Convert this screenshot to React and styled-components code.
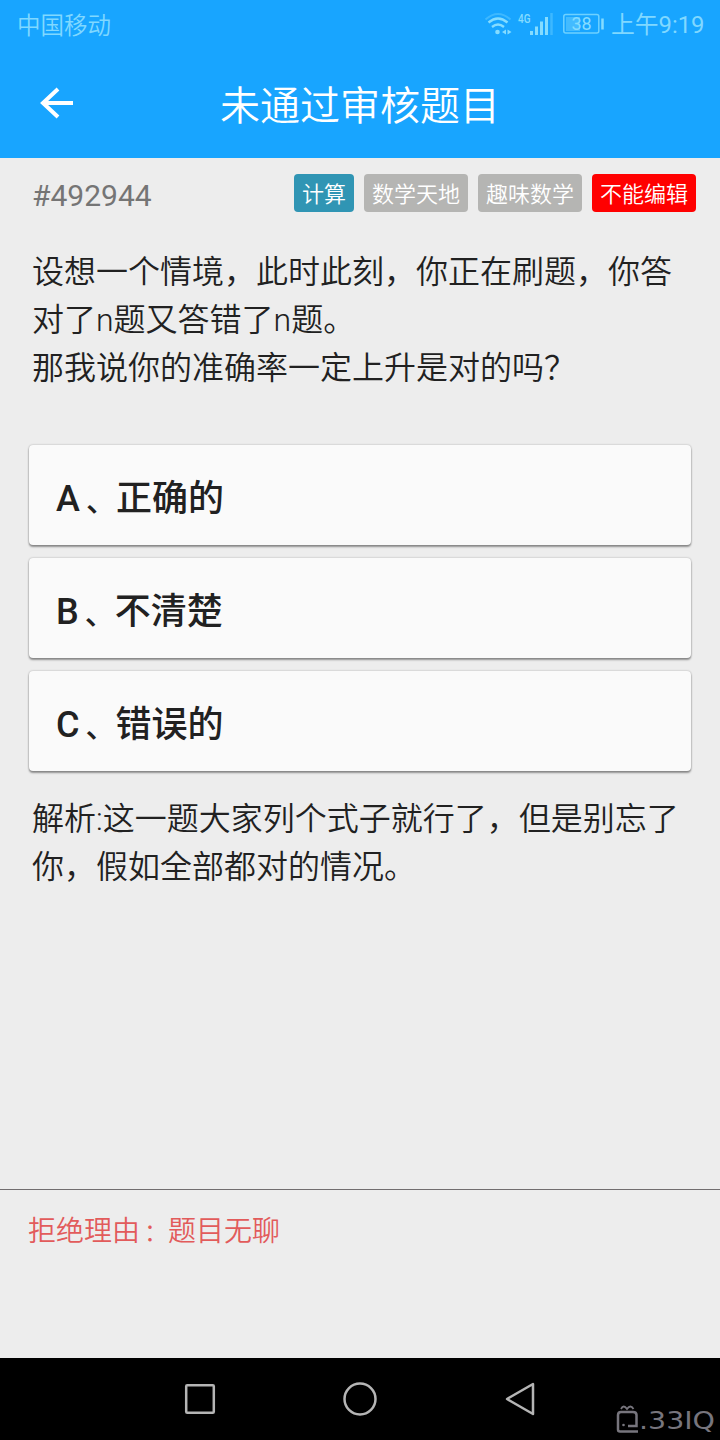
import React from "react";
import styled, { createGlobalStyle } from "styled-components";

const GlobalStyle = createGlobalStyle`
  * { box-sizing: border-box; }
  body {
    margin: 0;
    background: #ededed;
    font-family: Roboto, "Noto Sans CJK SC", sans-serif;
  }
`;

const Screen = styled.div`
  display: flex;
  flex-direction: column;
  width: 720px;
  height: 1440px;
  overflow: hidden;
  background: #ededed;
  color: #212121;
`;

const StatusBar = styled.header`
  display: flex;
  justify-content: space-between;
  align-items: center;
  height: 48px;
  padding: 0 16px 0 17px;
  background: #18a5ff;
  color: #80d8ff;
  font-size: 23.5px;
  font-weight: 350;
  white-space: nowrap;
`;

const StatusIcons = styled.div`
  display: flex;
  align-items: center;
`;

const Clock = styled.span`
  width: 93px;
  margin-left: 5px;
  padding-bottom: 3px;
  font-size: 23.8px;
  font-weight: 400;
`;

const TitleBar = styled.div`
  display: grid;
  grid-template-columns: 113px 1fr 113px;
  align-items: center;
  height: 110px;
  background: #18a5ff;
  color: #fff;
`;

const BackButton = styled.button`
  display: flex;
  justify-content: center;
  height: 64px;
  align-items: center;
  padding: 0;
  border: 0;
  background: none;
  color: inherit;
`;

const Title = styled.h1`
  margin: 0;
  padding-top: 8px;
  text-align: center;
  font-size: 40px;
  line-height: 60px;
  font-weight: 350;
`;

const Content = styled.main`
  display: flex;
  flex-direction: column;
  height: 1031px;
`;

const MetaRow = styled.div`
  display: flex;
  justify-content: space-between;
  align-items: center;
  height: 38px;
  margin: 16px 24px 0 32px;
`;

const QuestionId = styled.span`
  padding-top: 4px;
  color: #757575;
  font-size: 30px;
`;

const Tags = styled.div`
  display: flex;
  gap: 10px;
`;

const Tag = styled.span`
  height: 38px;
  padding: 0 8px;
  border-radius: 4px;
  background: ${({ $color }) => $color};
  color: #fff;
  font-size: 22px;
  line-height: 42px;
  font-weight: 350;
`;

const Paragraph = styled.p`
  margin: ${({ $top }) => $top}px 32px 0;
  font-size: 32px;
  line-height: 48px;
  font-weight: 350;
  white-space: pre;
`;

const Options = styled.div`
  display: flex;
  flex-direction: column;
  gap: 13px;
  margin: 53px 29px 0;
`;

const Option = styled.button`
  height: 100px;
  padding: 0 27px;
  border: 0;
  border-radius: 4px;
  background: #fafafa;
  color: #212121;
  box-shadow: 0 2px 2px rgba(0, 0, 0, 0.38), 0 0 2px rgba(0, 0, 0, 0.3);
  font: 500 36px Roboto, "Noto Sans CJK SC", sans-serif;
  text-align: left;
`;

const Separator = styled.span`
  padding-left: 6px;
  font-size: 30px;
`;

const Colon = styled.span`
  padding-left: 4px;
  font-size: 24px;
`;

const Rejection = styled.footer`
  height: 169px;
  padding: 22px 28px;
  border-top: 1px solid #716d6f;
  color: #e25b5b;
  font-size: 28px;
  line-height: 40px;
  font-weight: 350;
`;

const NavBar = styled.nav`
  position: relative;
  display: flex;
  justify-content: center;
  align-items: center;
  gap: 120px;
  height: 82px;
  background: #000;
`;

const NavIcon = styled.svg`
  width: 40px;
  height: 40px;
  fill: none;
  stroke: #b5b5b5;
  stroke-width: 2.5;
  stroke-linejoin: round;
`;

const Watermark = styled.div`
  position: absolute;
  right: 4px;
  bottom: 6px;
  display: flex;
`;

const WatermarkText = styled.svg`
  fill: #77757d;
  font: 24px "DejaVu Sans", sans-serif;
`;

const options = [
  ["A", "正确的"],
  ["B", "不清楚"],
  ["C", "错误的"],
];
const tags = [
  ["计算", "#3095b4"],
  ["数学天地", "#b5b5b3"],
  ["趣味数学", "#b5b5b3"],
  ["不能编辑", "#ff0000"],
];

function SignalIcons() {
  return (
    <svg width="122" height="40" viewBox="484 4 122 40" fill="none" stroke="#85dcff">
      <path d="M485.5 19.5Q498 8.500 510.500 19.500" strokeWidth="2" opacity=".35" />
      <path d="M488.500 22.500Q498 14.500 507.500 22.500M492 27Q498 22 504 27" strokeWidth="2.300" />
      <circle cx="497.500" cy="32" r="2.300" fill="#85dcff" stroke="none" />
      <path d="M506 29.500v5l-4-2.500zM507.500 29.500v5l4-2.500z" fill="#85dcff" stroke="none" />
      <text x="518" y="22.500" fill="#85dcff" stroke="none" fontSize="13" fontWeight="500" textLength="12.500" lengthAdjust="spacingAndGlyphs">4G</text>
      <path d="M531.500 31v4M536.500 26.500v8.500M541.500 21.500v13.500M546.500 17v18" strokeWidth="3" />
      <path d="M551.500 13v22" strokeWidth="2.500" opacity=".35" />
      <rect x="563.800" y="14.500" width="35" height="18.500" rx="2" strokeWidth="1.500" opacity=".8" />
      <rect x="566" y="17" width="14" height="14" fill="#85dcff" stroke="none" opacity=".4" />
      <path d="M602.500 18.500v11" strokeWidth="2.500" />
      <text x="571.500" y="30" fill="#85dcff" stroke="none" fontSize="18" fontWeight="400">38</text>
    </svg>
  );
}

export default function App() {
  return (
    <>
      <GlobalStyle />
      <Screen>
        <StatusBar>
          <span>中国移动</span>
          <StatusIcons>
            <SignalIcons />
            <Clock>上午9:19</Clock>
          </StatusIcons>
        </StatusBar>
        <TitleBar>
          <BackButton aria-label="返回">
            <svg width="34" height="32" viewBox="40 87 34 32" fill="none" stroke="#fff" strokeWidth="4">
              <path d="M73 103H43M58 89L43 103l15 14" />
            </svg>
          </BackButton>
          <Title>未通过审核题目</Title>
        </TitleBar>
        <Content>
          <MetaRow>
            <QuestionId>#492944</QuestionId>
            <Tags>
              {tags.map(([label, color]) => (
                <Tag key={label} $color={color}>{label}</Tag>
              ))}
            </Tags>
          </MetaRow>
          <Paragraph $top={36}>
            {"设想一个情境，此时此刻，你正在刷题，你答\n对了n题又答错了n题。\n那我说你的准确率一定上升是对的吗？"}
          </Paragraph>
          <Options>
            {options.map(([letter, label]) => (
              <Option key={letter}>
                {letter}<Separator>、</Separator>{label}
              </Option>
            ))}
          </Options>
          <Paragraph $top={24}>
            {"解析:这一题大家列个式子就行了，但是别忘了\n你，假如全部都对的情况。"}
          </Paragraph>
        </Content>
        <Rejection>拒绝理由<Colon>：</Colon>题目无聊</Rejection>
        <NavBar>
          <NavIcon viewBox="0 0 40 40">
            <rect x="6.200" y="6.200" width="27.600" height="27.600" rx="1" />
          </NavIcon>
          <NavIcon viewBox="0 0 40 40">
            <circle cx="20" cy="20" r="15.500" />
          </NavIcon>
          <NavIcon viewBox="0 0 40 40">
            <path d="M33 5V35L7 20z" />
          </NavIcon>
          <Watermark>
            <svg width="24" height="30" viewBox="616 1404 24 30" fill="none" stroke="#77757d">
              <path d="M621 1409q2.500-5 6 0q3.500-5 6.500 0" strokeWidth="1.800" />
              <path d="M638 1431.500H620q-2 0-2-2V1415q0-3 3-3H633q3.500 0 3.500 3V1426H628" strokeWidth="2.500" />
              <circle cx="623.500" cy="1425" r="1.300" fill="#77757d" stroke="none" />
            </svg>
            <WatermarkText width="76" height="30" viewBox="640 1404 76 30">
              <text x="639" y="1429" textLength="76" lengthAdjust="spacingAndGlyphs">.33IQ</text>
            </WatermarkText>
          </Watermark>
        </NavBar>
      </Screen>
    </>
  );
}
